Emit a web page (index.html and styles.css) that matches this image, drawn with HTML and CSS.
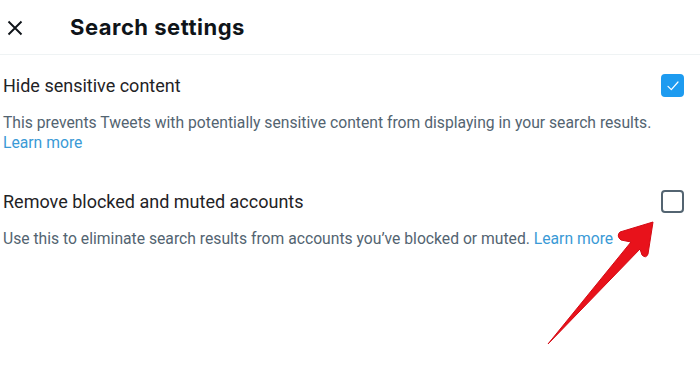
FILE: index.html
```html
<!DOCTYPE html>
<html lang="en">
<head>
  <meta charset="UTF-8">
  <meta name="viewport" content="width=device-width, initial-scale=1.0">
  <title>Search settings</title>
  <link rel="stylesheet" href="styles.css">
</head>
<body>

  <div class="page">
    <!-- En-tête -->
    <div class="header">
      <button class="close-btn" aria-label="Close">
        <svg viewBox="0 0 16 16" width="16" height="16">
          <path d="M1.5 1.5 L14.5 14.5 M14.5 1.5 L1.5 14.5" stroke="#0f1419" stroke-width="1.9" fill="none"/>
        </svg>
      </button>
      <h1>Search settings</h1>
    </div>

    <div class="setting">
      <div class="setting-row">
        <span class="setting-label">Hide sensitive content</span>
        <span class="checkbox checked">
          <svg viewBox="0 0 24 24" width="16" height="16">
            <path d="M4.5 12.5 L9.5 17.5 L19.5 6" stroke="#fff" stroke-width="1.8" fill="none" stroke-linecap="round" stroke-linejoin="round"/>
          </svg>
        </span>
      </div>
      <p class="setting-desc">This prevents Tweets with potentially sensitive content from displaying in your search results. <a href="#">Learn more</a></p>
    </div>

    <div class="setting">
      <div class="setting-row">
        <span class="setting-label">Remove blocked and muted accounts</span>
        <span class="checkbox"></span>
      </div>
      <p class="setting-desc">Use this to eliminate search results from accounts you’ve blocked or muted. <a href="#">Learn more</a></p>
    </div>

    <!-- Flèche rouge par-dessus -->
    <svg class="arrow" viewBox="0 0 700 379" width="700" height="379">
      <path d="M653 222 L620 232 Q616 236 621 240 L631 242 L548 344 L640 249 L642 255 Q646 259 648 254 Z" fill="#e8121b" stroke="#d40a14" stroke-width="1" stroke-linejoin="round"/>
    </svg>
  </div>

</body>
</html>
```

FILE: styles.css
```css
* {
    box-sizing: border-box;
}
body, html {
    margin: 0;
    padding: 0;
    background: #fff;
    font-family: Roboto, 'Noto Sans', sans-serif;
    color: #0f1419;
}
.page {
    position: relative;
    width: 700px;
    height: 379px;
    overflow: hidden;
}
.header {
    display: flex;
    align-items: center;
    height: 55px;
    border-bottom: 1px solid #eff3f4;
    padding-left: 7px;
}
.close-btn {
    display: flex;
    align-items: center;
    justify-content: center;
    width: 16px;
    height: 16px;
    padding: 0;
    border: none;
    background: none;
    margin-top: 1px;
}
h1 {
    margin: 0 0 0 47px;
    font-family: Inter, Roboto, sans-serif;
    font-size: 22px;
    font-weight: 700;
    letter-spacing: 0.5px;
}
.setting {
    padding: 19px 16px 18px 3px;
}
.setting-row {
    display: flex;
    align-items: center;
    justify-content: space-between;
    height: 23px;
}
.setting-label {
    font-size: 18px;
    color: #1f2326;
}
.checkbox {
    display: flex;
    align-items: center;
    justify-content: center;
    width: 23px;
    height: 23px;
    border: 2px solid #536471;
    border-radius: 4px;
}
.checkbox.checked {
    background: #1d9bf0;
    border-color: #1d9bf0;
}
.setting-desc {
    margin: 16px 0 0;
    max-width: 660px;
    font-size: 15.7px;
    line-height: 20px;
    color: #536471;
}
.setting-desc a {
    color: #3a9ad6;
    text-decoration: none;
}
.arrow {
    position: absolute;
    left: 0;
    top: 0;
}
```
